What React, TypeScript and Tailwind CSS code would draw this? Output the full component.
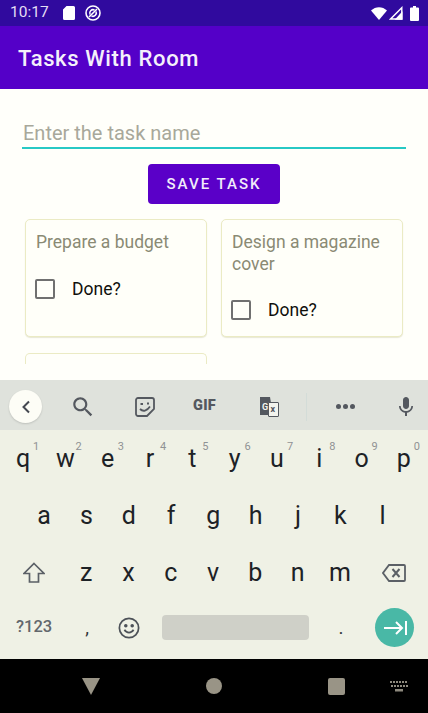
const FONT = "font-['Roboto','Liberation_Sans',sans-serif]";

const ROW_1 = [
  ["q", "1"],
  ["w", "2"],
  ["e", "3"],
  ["r", "4"],
  ["t", "5"],
  ["y", "6"],
  ["u", "7"],
  ["i", "8"],
  ["o", "9"],
  ["p", "0"],
];
const ROW_2 = ["a", "s", "d", "f", "g", "h", "j", "k", "l"];
const ROW_3 = ["z", "x", "c", "v", "b", "n", "m"];

function StatusBar() {
  return (
    <div className="flex h-[26px] shrink-0 items-center justify-between bg-[#300a9e] pl-[10px] pr-[9px] text-white">
      <div className="flex items-center">
        <span className="w-[40px] text-[15.5px] leading-none text-[#e4def5]">10:17</span>
        <svg viewBox="0 0 12 14" className="ml-[13px] h-[14px] w-[12px]" fill="#fff">
          <path d="M3.5 0H10.5A1.5 1.5 0 0 1 12 1.500V12.500A1.500 1.500 0 0 1 10.500 14H1.500A1.500 1.500 0 0 1 0 12.500V3.500Z" />
        </svg>
        <svg viewBox="0 0 16 16" className="ml-[10px] h-[16px] w-[16px]" fill="none" stroke="#fff" strokeWidth="1.6">
          <circle cx="8" cy="8" r="7" />
          <path d="M5 9.500A3.400 3.400 0 0 1 9.500 5M11 6.500A3.400 3.400 0 0 1 6.500 11" />
          <path d="M4 12 12 4" />
        </svg>
      </div>
      <div className="flex items-center">
        <svg viewBox="0 0 16 13" className="h-[13px] w-[16px]" fill="#fff">
          <path d="M0 3.500C4.500-1 11.500-1 16 3.500L8 13Z" />
        </svg>
        <svg viewBox="0 0 14 14" className="ml-[2px] h-[14px] w-[14px]" fill="none" stroke="#fff" strokeWidth="1.4">
          <path d="M12.800 1.700V13H1.600Z" />
          <path d="M12.800 7V13H7.200Z" fill="#fff" />
        </svg>
        <svg viewBox="0 0 9 15" className="ml-[7px] h-[15px] w-[9px]" fill="#fff">
          <path d="M3 0H6V1.500H8A1 1 0 0 1 9 2.500V14A1 1 0 0 1 8 15H1A1 1 0 0 1 0 14V2.500A1 1 0 0 1 1 1.500H3Z" />
        </svg>
      </div>
    </div>
  );
}

function TaskCard({ title }: { title: string }) {
  return (
    <div className="flex h-[118px] flex-col rounded-[5px] border border-[#ebebc4] bg-[#fffff9] pl-[3px] pt-[12px] shadow-[0_1px_1px_rgba(190,190,150,0.35)]">
      <p className="ml-[7px] pr-[4px] text-[17.5px] leading-[21.5px] text-[#8a8a74]">{title}</p>
      <div className="mt-[23px] flex items-center">
        <span className="ml-[6px] h-[20px] w-[20px] rounded-[2px] border-2 border-[#707070]" />
        <span className="ml-[17px] text-[17.5px] leading-[24px] text-[#10100c]">Done?</span>
      </div>
    </div>
  );
}

function KeyboardToolbar() {
  return (
    <div className="flex h-[50px] shrink-0 items-center bg-[#dfe2dc] pl-[9px] pt-[3px] text-[#54585f]">
      <span className="flex h-[33px] w-[33px] items-center justify-center rounded-full bg-[#fdfdf6] shadow-[0_1px_2px_rgba(0,0,0,0.15)]">
        <svg viewBox="0 0 12 14" className="h-[14px] w-[12px]" fill="none" stroke="#444850" strokeWidth="2">
          <path d="M9 1.500 3.500 7 9 12.500" />
        </svg>
      </span>
      <svg viewBox="0 0 24 24" className="ml-[28px] h-[26px] w-[26px]" fill="currentColor">
        <path d="M15.500 14h-.79l-.28-.27C15.410 12.590 16 11.110 16 9.500 16 5.910 13.090 3 9.500 3S3 5.910 3 9.500 5.910 16 9.500 16c1.610 0 3.090-.59 4.230-1.570l.27.28v.79l5 4.990L20.490 19l-4.990-5zm-6 0C7.010 14 5 11.990 5 9.500S7.010 5 9.500 5 14 7.010 14 9.500 11.990 14 9.500 14z" />
      </svg>
      <svg viewBox="0 0 20 20" className="ml-[39px] h-[20px] w-[20px]" fill="none" stroke="currentColor" strokeWidth="1.800">
        <path d="M3 1H17A2 2 0 0 1 19 3V12L12 19H3A2 2 0 0 1 1 17V3A2 2 0 0 1 3 1Z" />
        <path d="M5 12C8 15 12 14 15 9.500" />
        <path d="M5.500 7H8M12 6.500H14" />
      </svg>
      <span className="ml-[38px] w-[26px] text-[14.5px] font-black leading-none tracking-[0.3px]">GIF</span>
      <svg viewBox="0 0 20 20" className="ml-[40px] h-[20px] w-[20px]" fill="currentColor">
        <path d="M1 0H11L14 18H1Z" />
        <rect x="9.500" y="5.500" width="10" height="14" rx="0.500" fill="#f3f4ee" stroke="currentColor" strokeWidth="1" />
        <text x="3" y="13" fontSize="9" fontWeight="700" fill="#f3f4ee">G</text>
        <text x="11.500" y="15" fontSize="9" fontWeight="700" fill="currentColor">x</text>
      </svg>
      <span className="ml-[27px] h-[28px] w-px bg-[#d3dcd8]" />
      <span className="ml-[29px] flex gap-[2px]">
        <span className="h-[5px] w-[5px] rounded-full bg-current" />
        <span className="h-[5px] w-[5px] rounded-full bg-current" />
        <span className="h-[5px] w-[5px] rounded-full bg-current" />
      </span>
      <svg viewBox="0 0 24 24" className="ml-[39px] h-[24px] w-[24px]" fill="currentColor">
        <path d="M12 14c1.660 0 2.990-1.340 2.990-3L15 5c0-1.660-1.340-3-3-3S9 3.340 9 5v6c0 1.660 1.340 3 3 3zm5.300-3c0 3-2.540 5.100-5.300 5.100S6.700 14 6.700 11H5c0 3.410 2.720 6.230 6 6.720V21h2v-3.280c3.280-.48 6-3.300 6-6.720h-1.700z" />
      </svg>
    </div>
  );
}

function Letter({ label, hint }: { label: string; hint?: string }) {
  return (
    <span className="relative flex h-full w-[42.3px] items-center justify-center text-[25px] leading-none text-[#1d2226]">
      {label}
      {hint ? (
        <span className="absolute right-[5px] top-[11px] text-[11px] leading-none text-[#8f9294]">{hint}</span>
      ) : null}
    </span>
  );
}

function Keyboard() {
  return (
    <div className="flex h-[279px] shrink-0 flex-col bg-[#eff1e5]">
      <KeyboardToolbar />
      <div className="flex h-[57px] items-center pl-[2px]">
        {ROW_1.map(([label, hint]) => (
          <Letter key={label} label={label} hint={hint} />
        ))}
      </div>
      <div className="flex h-[57px] items-center pl-[23px]">
        {ROW_2.map((label) => (
          <Letter key={label} label={label} />
        ))}
      </div>
      <div className="flex h-[57px] items-center pl-[23px]">
        <svg viewBox="0 0 22 22" className="h-[22px] w-[22px]" fill="none" stroke="#5b6066" strokeWidth="1.700">
          <path d="M11 1.500 21 11.500H15.500V20H6.500V11.500H1Z" />
        </svg>
        <div className="ml-[20px] flex h-full">
          {ROW_3.map((label) => (
            <Letter key={label} label={label} />
          ))}
        </div>
        <svg viewBox="0 0 24 20" className="ml-[21px] h-[20px] w-[24px]" fill="none" stroke="#5b6066" strokeWidth="1.800">
          <path d="M7 2H22A1 1 0 0 1 23 3V17A1 1 0 0 1 22 18H7L1 10Z" />
          <path d="M10.500 6 17.500 14M17.500 6 10.500 14" strokeWidth="2" />
        </svg>
      </div>
      <div className="flex flex-1 items-center pb-[5px] pl-[16px]">
        <span className="w-[37px] text-[16.5px] font-medium leading-none text-[#62676c]">?123</span>
        <span className="ml-[31px] w-[6px] text-center text-[19px] leading-none text-[#30353a]">,</span>
        <svg viewBox="0 0 24 24" className="ml-[28px] h-[22px] w-[22px]" fill="none" stroke="#4d5258" strokeWidth="1.900">
          <circle cx="12" cy="12" r="10.500" />
          <path d="M7 14c2.500 4 7.500 4 10 0" />
          <circle cx="8.500" cy="9.500" r="1" fill="#4d5258" />
          <circle cx="15.500" cy="9.500" r="1" fill="#4d5258" />
        </svg>
        <span className="ml-[22px] h-[25px] w-[147px] rounded-[4px] bg-[#cfd0c8]" />
        <span className="ml-[29px] w-[6px] text-center text-[19px] leading-none text-[#30353a]">.</span>
        <span className="ml-[31px] flex h-[39px] w-[39px] items-center justify-center rounded-full bg-[#49b8a6]">
          <svg viewBox="0 0 24 16" className="h-[16px] w-[24px]" fill="none" stroke="#fff" strokeWidth="2">
            <path d="M1 8H19M13 2l6 6-6 6M23 1V15" />
          </svg>
        </span>
      </div>
    </div>
  );
}

function NavBar() {
  return (
    <div className="flex h-[54px] shrink-0 items-center bg-black pl-[82px]">
      <span className="h-0 w-0 border-x-[9px] border-t-[17px] border-x-transparent border-t-[#999486]" />
      <span className="ml-[106px] h-[16px] w-[16px] rounded-full bg-[#999486]" />
      <span className="ml-[106px] h-[17px] w-[17px] rounded-[2px] bg-[#999486]" />
      <svg viewBox="0 0 18 11" className="ml-[45px] h-[11px] w-[18px]" fill="#8e8a7e">
        <path d="M0 0h2v2H0zM3 0h2v2H3zM6 0h2v2H6zM9 0h2v2H9zM12 0h2v2h-2zM15 0h2v2h-2zM1 4h2v2H1zM4 4h2v2H4zM7 4h2v2H7zM10 4h2v2h-2zM13 4h2v2h-2zM16 4h2v2h-2zM5 8h8v2.500H5z" />
      </svg>
    </div>
  );
}

export default function App() {
  return (
    <div className={`flex h-[713px] w-[428px] flex-col overflow-hidden bg-[#fffffa] ${FONT}`}>
      <StatusBar />
      <header className="flex h-[63px] shrink-0 items-center bg-[#5400c8] pt-[3px] pl-[18px]">
        <h1 className="text-[22px] font-medium leading-none tracking-[0.65px] text-[#f4f0fb]">Tasks With Room</h1>
      </header>
      <main className="flex min-h-0 flex-1 flex-col overflow-hidden">
        <div className="mx-[22px] mt-[30px] h-[30px] border-b-2 border-[#27c9c4] pl-px pt-px text-[20px] leading-[26px] text-[#a8a89a]">
          Enter the task name
        </div>
        <button
          type="button"
          className="mx-auto mt-[15px] flex h-[40px] w-[132px] shrink-0 items-center justify-center rounded-[4px] bg-[#5a00c8] text-[15px] font-medium tracking-[2px] text-[#f1ecfa]"
        >
          SAVE TASK
        </button>
        <div className="mx-[25px] mt-[15px] grid grid-cols-[182px_182px] gap-x-[14px] gap-y-[16px]">
          <TaskCard title="Prepare a budget" />
          <TaskCard title="Design a magazine cover" />
          <div className="h-[11px] rounded-t-[5px] border border-b-0 border-[#ebebc4]" />
        </div>
      </main>
      <Keyboard />
      <NavBar />
    </div>
  );
}
